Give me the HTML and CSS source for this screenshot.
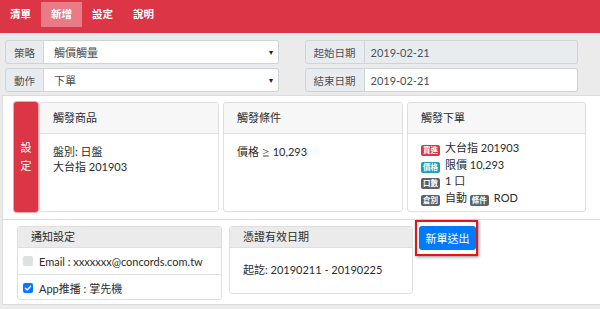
FILE: index.html
```html
<!DOCTYPE html>
<html>
<head>
<meta charset="UTF-8">
<title>新增</title>
<link rel="stylesheet" href="styles.css">
</head>
<body>
	<nav class="topbar">
		<a class="nav-item">清單</a>
		<a class="nav-item active">新增</a>
		<a class="nav-item">設定</a>
		<a class="nav-item">說明</a>
	</nav>

	<div class="form-grid">
		<div class="input-group">
			<span class="addon">策略</span>
			<div class="select">觸價觸量<span class="caret">▾</span></div>
		</div>
		<div class="input-group">
			<span class="addon">起始日期</span>
			<div class="field readonly">2019-02-21</div>
		</div>
		<div class="input-group">
			<span class="addon">動作</span>
			<div class="select">下單<span class="caret">▾</span></div>
		</div>
		<div class="input-group">
			<span class="addon">結束日期</span>
			<div class="field">2019-02-21</div>
		</div>
	</div>

	<!-- 觸發設定 -->
	<section class="panel trigger-panel">
		<button class="side-btn">設<br>定</button>
		<div class="card">
			<div class="card-head">觸發商品</div>
			<div class="card-body">
				<div>盤別: 日盤</div>
				<div>大台指 201903</div>
			</div>
		</div>
		<div class="card">
			<div class="card-head">觸發條件</div>
			<div class="card-body">
				<div>價格 <span class="cmp">≧</span> 10,293</div>
			</div>
		</div>
		<div class="card">
			<div class="card-head">觸發下單</div>
			<div class="card-body order-body">
				<div><span class="badge red">買進</span>大台指 201903</div>
				<div><span class="badge teal">價格</span>限價 10,293</div>
				<div><span class="badge grey">口數</span>1 口</div>
				<div><span class="badge grey">倉別</span>自動 <span class="badge grey">條件</span>ROD</div>
			</div>
		</div>
	</section>

	<!-- 通知 / 有效日期 -->
	<section class="panel notify-panel">
		<div class="card notify">
			<div class="card-head small">通知設定</div>
			<div class="list-row"><span class="check"></span>Email : xxxxxxx@concords.com.tw</div>
			<div class="list-row"><span class="check on">
				<svg viewBox="0 0 10 10" width="10" height="10"><path d="M2.4 5.2 L4.2 7 L7.6 3.2" fill="none" stroke="#fff" stroke-width="1.5" stroke-linecap="round" stroke-linejoin="round"/></svg>
			</span>App推播 : 掌先機</div>
		</div>
		<div class="card validity">
			<div class="card-head small">憑證有效日期</div>
			<div class="card-body">起訖: 20190211 - 20190225</div>
		</div>
		<div class="submit-wrap">
			<button class="submit">新單送出</button>
		</div>
	</section>
</body>
</html>
```

FILE: styles.css
```css
/* 基本 */
body {
	margin: 0;
	background-color: #ebebeb;
	font-family: Lato, "Noto Sans CJK TC", sans-serif;
	font-size: 11px;
	color: #2b2b2b;
	overflow: hidden;
}

/* 上方選單 */
.topbar {
	display: flex;
	align-items: flex-start;
	height: 33px;
	background-color: #dc3545;
}

.nav-item {
	margin-top: 2px;
	height: 25px;
	line-height: 25px;
	padding: 0 10px;
	font-size: 10.5px;
	font-weight: bold;
	color: #ffffff;
}

.nav-item.active {
	background-color: rgba(255, 255, 255, 0.35);
}

/* 表單 */
.form-grid {
	display: grid;
	grid-template-columns: 1fr 1fr;
	column-gap: 26px;
	row-gap: 4px;
	padding: 7px 22px 0 5px;
}

.input-group {
	display: flex;
	height: 24px;
}

.addon {
	display: flex;
	align-items: center;
	padding: 0 8px;
	background-color: #e9ecef;
	border: 1px solid #ced4da;
	border-radius: 3px 0 0 3px;
	color: #495057;
	font-size: 10.5px;
}

.select, .field {
	flex: 1;
	display: flex;
	align-items: center;
	background-color: #ffffff;
	border: 1px solid #ced4da;
	border-left: none;
	border-radius: 0 3px 3px 0;
	color: #495057;
}

.select {
	padding: 0 5px 0 10px;
}

.caret {
	margin-left: auto;
	font-size: 8px;
	color: #222;
}

.field {
	padding: 0 6px;
}

.field.readonly {
	background-color: #e9ecef;
}

/* 白色區塊 */
.panel {
	display: flex;
	align-items: flex-start;
	margin-left: 2px;
	background-color: #ffffff;
	border: 1px solid #dcdcdc;
	border-right: none;
}

.trigger-panel {
	align-items: stretch;
	margin-top: 3px;
	padding: 6px 0 7px 11px;
	gap: 4px;
}

.side-btn {
	width: 24px;
	margin-right: -3px;
	padding: 0;
	background-color: #dc3545;
	border: none;
	border-radius: 3px;
	box-shadow: 0 0 0 1px rgba(220, 53, 69, 0.45);
	color: #ffffff;
	font-family: inherit;
	font-size: 11px;
	line-height: 18px;
}

.card {
	width: 180px;
	height: 110px;
	box-sizing: border-box;
	border: 1px solid #dfdfdf;
	border-radius: 3px;
	background-color: #ffffff;
}

.trigger-panel .card:last-child {
	width: 179px;
}

.card-head {
	height: 30px;
	line-height: 30px;
	padding-left: 13px;
	background-color: #f7f7f7;
	border-bottom: 1px solid #dfdfdf;
	border-radius: 3px 3px 0 0;
}

.card-head.small {
	height: 20px;
	line-height: 20px;
	background-color: #ebebeb;
}

.card-body {
	padding: 10px 13px;
	line-height: 15px;
}

.cmp {
	font-size: 8px;
	color: #555;
}

.order-body {
	padding-top: 6px;
	line-height: 16.7px;
}

.badge {
	display: inline-block;
	margin-right: 5px;
	padding: 0 2px;
	height: 11px;
	line-height: 11px;
	border-radius: 2px;
	font-size: 7.5px;
	font-weight: bold;
	color: #ffffff;
	vertical-align: -1px;
}

.badge.red { background-color: #dc3545; }
.badge.teal { background-color: #17a2b8; }
.badge.grey { background-color: #5a6268; }

/* 通知 */
.notify-panel {
	border-top: none;
	padding: 6px 0 4px 14px;
}

.notify {
	width: 205px;
	height: 74px;
}

.list-row {
	display: flex;
	align-items: center;
	height: 26px;
	padding-left: 5px;
	border-bottom: 1px solid #dfdfdf;
}

.list-row:last-child {
	border-bottom: none;
}

.check {
	display: flex;
	width: 10px;
	height: 10px;
	margin-right: 6px;
	border-radius: 2px;
	background-color: #dde0e4;
}

.check.on {
	background-color: #007bff;
}

.validity {
	width: 184px;
	height: 68px;
	margin-left: 7px;
}

.validity .card-body {
	padding-top: 14px;
}

.submit-wrap {
	position: relative;
	margin-left: 6px;
}

.submit {
	width: 57px;
	height: 24px;
	padding: 0;
	background-color: #007bff;
	border: none;
	border-radius: 3px;
	color: #ffffff;
	font-family: inherit;
	font-size: 11px;
}

/* 標示框 */
.submit-wrap::after {
	content: "";
	position: absolute;
	top: -6px;
	bottom: -6px;
	left: -4px;
	right: -2px;
	border: 2px solid #e5141c;
	box-shadow: 1px 1px 3px rgba(0, 0, 0, 0.45);
}
```
